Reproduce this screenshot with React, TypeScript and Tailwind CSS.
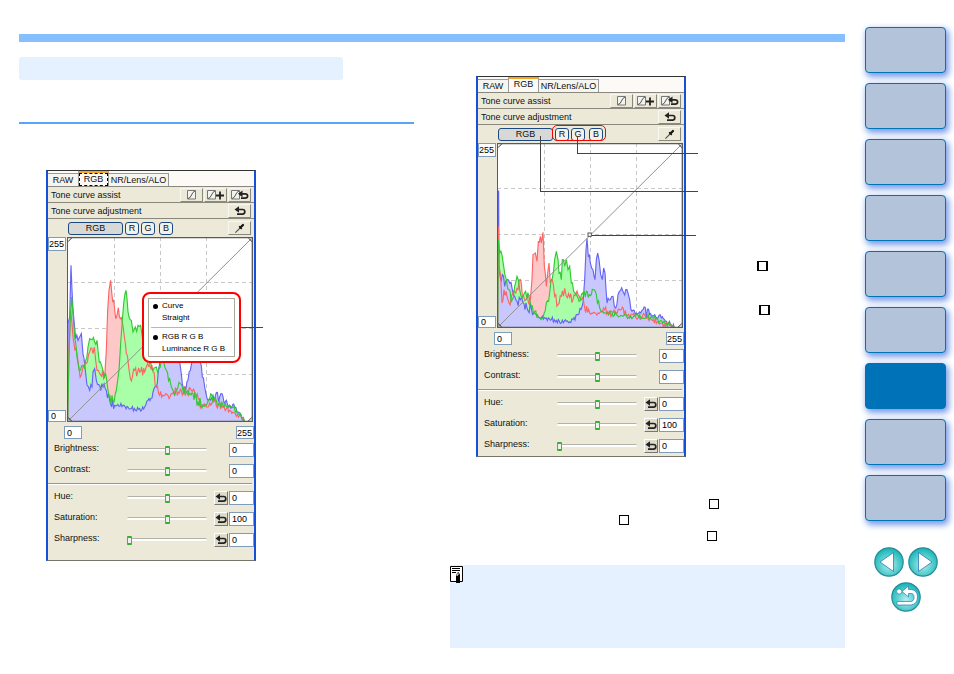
import { useState } from "react";
import type { ReactNode } from "react";

type Pt = [number, number];
type Channels = { red: Pt[]; green: Pt[]; blue: Pt[] };

// histogram outlines, on a 558 x 555 canvas
const histogramA: Channels = {
  red: [
    [2, 550], [6, 340], [11, 220], [15, 260], [21, 320], [30, 350], [36, 395], [43, 415], [48, 390], [58, 380],
    [68, 345], [78, 350], [82, 330], [86, 370], [90, 400], [98, 410], [113, 420], [118, 340], [122, 220], [126, 160],
    [131, 130], [134, 165], [140, 190], [146, 245], [150, 235], [154, 212], [160, 245], [166, 255], [172, 300], [178, 350],
    [185, 390], [190, 425], [203, 400], [218, 405], [233, 405], [248, 385], [258, 405], [268, 450], [275, 470], [293, 475],
    [313, 470], [343, 460], [358, 465], [373, 460], [388, 480], [403, 505], [418, 510], [438, 490], [458, 505], [478, 515],
    [498, 525], [518, 535], [532, 552],
  ],
  green: [
    [2, 550], [6, 360], [10, 240], [14, 180], [18, 230], [23, 300], [30, 360], [40, 400], [48, 385], [56, 370],
    [63, 330], [68, 305], [76, 308], [83, 315], [90, 310], [94, 350], [100, 375], [108, 400], [118, 420], [126, 480],
    [138, 493], [148, 460], [156, 400], [161, 320], [166, 250], [170, 200], [174, 170], [177, 160], [180, 185], [186, 240],
    [193, 250], [198, 285], [205, 270], [213, 265], [221, 265], [226, 300], [238, 345], [248, 380], [258, 400], [268, 390],
    [276, 395], [284, 355], [290, 375], [298, 400], [308, 425], [313, 450], [320, 465], [333, 450], [348, 460], [363, 460],
    [378, 470], [393, 495], [408, 505], [418, 505], [428, 485], [448, 490], [468, 505], [488, 505], [508, 520], [532, 552],
  ],
  blue: [
    [2, 550], [3, 260], [8, 240], [12, 85], [15, 160], [21, 250], [26, 305], [33, 310], [38, 300], [43, 290],
    [48, 350], [55, 400], [60, 445], [68, 460], [75, 450], [78, 405], [83, 395], [88, 430], [98, 445], [108, 450],
    [118, 460], [128, 490], [143, 505], [168, 505], [193, 515], [218, 515], [233, 510], [243, 490], [258, 465], [268, 450],
    [274, 400], [278, 380], [283, 300], [293, 280], [310, 300], [330, 350], [338, 375], [346, 440], [354, 450], [363, 430],
    [370, 400], [378, 365], [383, 330], [393, 350], [400, 375], [406, 420], [413, 450], [418, 475], [428, 485], [438, 475],
    [458, 480], [478, 490], [488, 505], [503, 510], [510, 525], [520, 530], [532, 552],
  ],
};

const histogramB: Channels = {
  red: [
    [2, 552], [4, 250], [6, 370], [11, 400], [15, 480], [21, 440], [30, 460], [36, 480], [43, 460], [53, 446],
    [63, 440], [70, 410], [76, 460], [88, 470], [100, 470], [105, 410], [108, 335], [115, 330], [120, 355], [124, 296],
    [130, 280], [133, 300], [138, 268], [142, 370], [148, 430], [152, 390], [156, 360], [160, 420], [166, 410], [173, 460],
    [183, 485], [193, 460], [203, 436], [208, 460], [228, 470], [243, 455], [253, 470], [263, 495], [278, 510], [303, 510],
    [323, 500], [348, 510], [373, 500], [388, 520], [408, 515], [423, 525], [443, 515], [463, 530], [493, 540], [532, 553],
  ],
  green: [
    [2, 552], [4, 290], [8, 330], [15, 336], [20, 370], [28, 410], [36, 440], [46, 470], [53, 430], [60, 400],
    [68, 440], [78, 460], [86, 445], [96, 460], [103, 490], [113, 505], [123, 522], [138, 525], [148, 480], [158, 450],
    [166, 405], [173, 350], [178, 325], [183, 350], [186, 390], [193, 410], [196, 350], [203, 370], [208, 350], [213, 380],
    [218, 370], [223, 420], [233, 450], [243, 465], [253, 455], [268, 445], [283, 455], [298, 455], [308, 495], [318, 505],
    [338, 510], [358, 515], [378, 520], [398, 525], [418, 515], [438, 525], [463, 520], [488, 535], [508, 542], [532, 553],
  ],
  blue: [
    [2, 552], [2, 144], [5, 144], [6, 370], [10, 405], [16, 395], [23, 430], [31, 410], [38, 420], [46, 440],
    [53, 460], [60, 475], [70, 470], [78, 480], [90, 495], [103, 495], [113, 510], [123, 520], [133, 525], [148, 525],
    [178, 532], [208, 535], [228, 530], [243, 515], [258, 480], [263, 410], [267, 320], [270, 286], [274, 340], [280, 360],
    [288, 380], [294, 410], [298, 350], [302, 330], [306, 350], [311, 395], [316, 410], [320, 375], [324, 390], [330, 480],
    [340, 470], [348, 460], [356, 495], [363, 455], [371, 442], [380, 450], [386, 440], [393, 450], [398, 470], [405, 505],
    [418, 510], [438, 500], [458, 515], [473, 515], [493, 525], [508, 535], [532, 553],
  ],
};

// adds the small bin-to-bin noise between the outline points
function jag(points: Pt[], seed: number) {
  let s = seed;
  const out: string[] = [];
  points.forEach(([x, y], i) => {
    out.push(`${x},${y}`);
    const next = points[i + 1];
    if (!next) return;
    const steps = Math.floor((next[0] - x) / 3);
    for (let k = 1; k < steps; k++) {
      s = (s * 73 + 41) % 997;
      const t = k / steps;
      const noise = (s / 997 - 0.5) * (y > 500 ? 16 : 32);
      out.push(`${x + (next[0] - x) * t},${Math.min(553, y + (next[1] - y) * t + noise)}`);
    }
  });
  return out.join(" ");
}

function Histogram({ data, handle }: { data: Channels; handle?: boolean }) {
  const red = jag(data.red, 11);
  const green = jag(data.green, 57);
  const blue = jag(data.blue, 203);
  return (
    <svg viewBox="0 0 558 555" preserveAspectRatio="none" className="block h-[185px] w-[186px] bg-white">
      <g stroke="#c8c8c8" strokeWidth="3" strokeDasharray="12 9" shapeRendering="crispEdges">
        <path d="M141 0V555M279 0V555M417 0V555M0 137H558M0 275H558M0 413H558" />
      </g>
      <polygon points={`${red} 2,555`} fill="#ffc8c8" />
      <polygon points={`${green} 2,555`} fill="#a8ffa8" />
      <polygon points={`${blue} 2,555`} fill="#c8c8ff" />
      <g fill="none" strokeWidth="3.4">
        <polyline points={blue} stroke="#6464f5" />
        <polyline points={red} stroke="#ff6464" />
        <polyline points={green} stroke="#32c832" />
      </g>
      <path d="M6 549L552 6" stroke="#909090" strokeWidth="3" />
      <path d="M3 14L14 3M544 3L555 14M3 541L14 552M544 552L555 541" stroke="#333" strokeWidth="3" />
      <path d="M1 0V555M556 0V555M0 2H558M0 553H558" stroke="#5a5a5a" strokeWidth="4" />
      {handle && <rect x="273" y="270" width="10" height="10" fill="#fff" stroke="#555" strokeWidth="3" />}
    </svg>
  );
}

function UndoIcon() {
  return (
    <svg viewBox="0 0 12 10" className="h-[10px] w-[12px]" fill="none" stroke="#222" strokeWidth="1.7">
      <path d="M3 3.5H8.6Q10.8 3.5 10.8 5.8T8.6 8.1H3" />
      <path d="M0.5 3.5L5 0.2V6.8z" fill="#222" stroke="none" />
    </svg>
  );
}

function CurveIcon({ kind }: { kind?: "plus" | "undo" }) {
  return (
    <svg viewBox="0 0 18 10" className="h-[10px] w-[18px]" fill="none">
      <g transform={kind ? "translate(0 0)" : "translate(4 0)"}>
        <path d="M0.5 0.5H8.5V9H0.5z" fill="#f4f4ee" stroke="#777" />
        <path d="M1 8.5Q3.5 8 4.5 5T8 1" stroke="#555" />
      </g>
      {kind === "plus" && <path d="M13 1.5V9.5M9 5.5H17" stroke="#222" strokeWidth="1.8" />}
      {kind === "undo" && (
        <>
          <path d="M10 3.8H14Q16.6 3.8 16.6 6T14 8.2H10" stroke="#222" strokeWidth="1.7" />
          <path d="M7 3.8L11.5 0.4V7.2z" fill="#222" />
        </>
      )}
    </svg>
  );
}

function DropperIcon() {
  return (
    <svg viewBox="0 0 12 12" className="h-[11px] w-[11px]">
      <path d="M1.5 10.5L7 5" stroke="#555" strokeWidth="1.4" />
      <path d="M5.5 3.5L8.5 6.5" stroke="#111" strokeWidth="1.3" />
      <path d="M7 5L9.8 2.2" stroke="#111" strokeWidth="2.4" strokeLinecap="round" />
    </svg>
  );
}

function ToolButton({ label, children }: { label: string; children: ReactNode }) {
  return (
    <button
      aria-label={label}
      className="flex h-[14px] w-[23px] items-center justify-center border border-t-[#f8f7f0] border-r-[#8a887c] border-b-[#8a887c] border-l-[#f8f7f0] bg-[#ece9d8]"
    >
      {children}
    </button>
  );
}

function NumberBox({ label, value, className }: { label: string; value: string; className: string }) {
  return (
    <input
      aria-label={label}
      defaultValue={value}
      className={`border border-[#7f9db9] bg-white py-0 pr-0 text-[9px] leading-[11px] text-black outline-none ${className}`}
    />
  );
}

function SliderRow({ label, value, at, reset }: { label: string; value: string; at: number; reset?: boolean }) {
  const [pos, setPos] = useState(at);
  return (
    <div className="flex h-[21px] items-center pl-[6px]">
      <label className="flex flex-1 items-center">
        <span className="w-[73px] pb-[2px]">{label}:</span>
        <input
          type="range"
          value={pos}
          onChange={(e) => setPos(Number(e.target.value))}
          className="h-[3px] w-[80px] appearance-none rounded-sm border-t border-[#b4b2a6] bg-white [&::-webkit-slider-thumb]:h-[9px] [&::-webkit-slider-thumb]:w-[5px] [&::-webkit-slider-thumb]:appearance-none [&::-webkit-slider-thumb]:rounded-[1px] [&::-webkit-slider-thumb]:border-x [&::-webkit-slider-thumb]:border-y-2 [&::-webkit-slider-thumb]:border-x-[#7d9080] [&::-webkit-slider-thumb]:border-y-[#35b035] [&::-webkit-slider-thumb]:bg-[#eef2ea]"
        />
      </label>
      {reset && (
        <button
          aria-label={`Reset ${label}`}
          className="mr-px flex h-[14px] w-[14px] items-center justify-center border border-t-white border-r-[#777] border-b-[#777] border-l-white bg-[#dedbc9]"
        >
          <UndoIcon />
        </button>
      )}
      <NumberBox label={`${label} value`} value={value} className="h-[14px] w-[25px] pl-[2px]" />
    </div>
  );
}

function ToolPalette({ data, focused, handle, className, children }: {
  data: Channels;
  focused?: boolean;
  handle?: boolean;
  className?: string;
  children?: ReactNode;
}) {
  const channel = "flex h-[13px] w-[14px] items-center justify-center rounded-[3px] border border-[#1c4a80] bg-[#f3f2ea]";
  return (
    <section
      className={`relative w-[210px] shrink-0 border-x-2 border-t border-b border-x-[#1650d8] border-t-[#333] border-b-[#77756a] bg-[#ece9d8] text-[9px] leading-[11px] text-[#111] ${className ?? ""}`}
    >
      <div className="flex h-[15px] items-end bg-[#fbfaf6]">
        <button className="h-[13px] w-[30px] border-t border-[#999] bg-[#f6f5ef]">RAW</button>
        <button className="flex h-[15px] w-[31px] items-start justify-center border-x border-t-2 border-x-[#999] border-t-[#f5a623] bg-[#fbfaf6]">
          <span className={focused ? "w-[29px] border border-dashed border-black" : "w-[29px]"}>RGB</span>
        </button>
        <button className="h-[13px] w-[60px] border-t border-r border-[#999] bg-[#f6f5ef]">NR/Lens/ALO</button>
      </div>
      <div className="flex h-[17px] items-center justify-between border-y border-[#8a887c] pr-[3px] pl-[3px]">
        <span className="pt-px">Tone curve assist</span>
        <div className="flex gap-px">
          <ToolButton label="Assist"><CurveIcon /></ToolButton>
          <ToolButton label="Assist more"><CurveIcon kind="plus" /></ToolButton>
          <ToolButton label="Undo assist"><CurveIcon kind="undo" /></ToolButton>
        </div>
      </div>
      <div className="flex h-[16px] items-center justify-between border-b border-[#8a887c] pr-[3px] pl-[3px]">
        <span className="pt-px">Tone curve adjustment</span>
        <ToolButton label="Reset curve"><UndoIcon /></ToolButton>
      </div>
      <div className="flex h-[18px] items-center pr-[3px] pl-5">
        <button className="flex h-[13px] w-[55px] items-center justify-center rounded-[3px] border border-[#1c4a80] bg-[#d8d8d6]">
          RGB
        </button>
        <div className="ml-[2px] flex flex-1 gap-[2px]">
          <button className={channel}>R</button>
          <button className={channel}>G</button>
          <button className={`ml-[2px] ${channel}`}>B</button>
        </div>
        <ToolButton label="Pick"><DropperIcon /></ToolButton>
      </div>
      <div className="flex">
        <div className="flex w-[19px] flex-col justify-between">
          <NumberBox label="Output maximum" value="255" className="h-[14px] w-[18px] pl-0" />
          <NumberBox label="Output minimum" value="0" className="h-[12px] w-[18px] pl-[2px]" />
        </div>
        <Histogram data={data} handle={handle} />
      </div>
      <div className="flex h-[17px] items-end justify-between pl-4">
        <NumberBox label="Input minimum" value="0" className="h-[13px] w-[18px] pl-[2px]" />
        <NumberBox label="Input maximum" value="255" className="h-[13px] w-[18px] pl-0" />
      </div>
      <SliderRow label="Brightness" value="0" at={50} />
      <SliderRow label="Contrast" value="0" at={50} />
      <hr className="mt-[2px] mr-[2px] mb-[2px] h-[2px] border-t border-b border-t-[#99978a] border-b-white" />
      <SliderRow label="Hue" value="0" at={50} reset />
      <SliderRow label="Saturation" value="100" at={50} reset />
      <SliderRow label="Sharpness" value="0" at={0} reset />
      {children}
    </section>
  );
}

function CurveMenu() {
  const item = "block w-full pl-[13px] text-left text-[8px] leading-[12px]";
  const picked = "relative before:absolute before:top-[4px] before:left-[4px] before:h-[5px] before:w-[5px] before:rounded-full before:bg-black";
  return (
    <div className="absolute top-[121px] left-[94px] w-[99px] rounded-lg border-2 border-[#ff0000] bg-white p-[4px]">
      <div className="border border-[#aaa89c] py-px text-black">
        <button className={`${item} ${picked}`}>Curve</button>
        <button className={item}>Straight</button>
        <hr className="mx-[2px] my-[3px] border-[#bbb8aa]" />
        <button className={`${item} ${picked}`}>RGB R G B</button>
        <button className={item}>Luminance R G B</button>
      </div>
    </div>
  );
}

function Tick({ className }: { className: string }) {
  return (
    <input
      type="checkbox"
      aria-label="Step"
      className={`block h-[10px] appearance-none border-y border-black bg-white ${className}`}
    />
  );
}

function RoundButton({ label, children }: { label: string; children: ReactNode }) {
  return (
    <button aria-label={label} className="h-[30px] w-[30px]">
      <svg viewBox="0 0 30 30" className="block h-full w-full">
        <defs>
          <radialGradient id={`fill-${label}`} cx="50%" cy="60%" r="55%">
            <stop offset="0" stopColor="#b4f0ee" />
            <stop offset="1" stopColor="#1cb8b8" />
          </radialGradient>
        </defs>
        <circle cx="15" cy="15" r="14.2" fill={`url(#fill-${label})`} stroke="#2a8a9a" strokeWidth="1.2" />
        {children}
      </svg>
    </button>
  );
}

const chapters = [1, 2, 3, 4, 5, 6, 7, 8, 9];

export default function App() {
  return (
    <div className="flex min-h-screen gap-5 bg-white pr-2 pl-[19px] font-['Liberation_Sans',Arial,sans-serif]">
      <main className="min-w-0 flex-1 pt-[34px]">
        <div className="h-2 bg-[#85bfff]" />
        <div className="grid grid-cols-2 gap-9">
          <div className="pt-[15px]">
            <div className="h-[23px] w-[82%] rounded-[3px] bg-[#e5f1fe]" />
            <div className="mt-[42px] h-[2px] bg-[#56a5fa]" />
            <ToolPalette data={histogramA} focused className="mt-[46px] ml-[27px] pb-[10px]">
              <CurveMenu />
              <div className="absolute top-[156px] left-[193px] h-px w-[22px] bg-[#444]" />
            </ToolPalette>
          </div>

          <div className="pt-[34px]">
            <div className="flex pl-[26px]">
              <ToolPalette data={histogramB} handle>
                <div className="absolute top-[48px] left-[74px] h-[16px] w-[54px] rounded-[5px] border border-[#ff0000]" />
                <div className="absolute top-[59px] left-[99px] h-[18px] w-[121px] border-b border-l border-[#444]" />
                <div className="absolute top-[59px] left-[62px] h-[56px] w-[158px] border-b border-l border-[#444]" />
                <div className="absolute top-[158px] left-[114px] h-px w-[104px] bg-[#444]" />
              </ToolPalette>
              <div className="flex flex-col gap-[34px] pt-[185px] pl-[71px]">
                <Tick className="w-[11px] border-x-2" />
                <Tick className="ml-[2px] w-[11px] border-x-2" />
              </div>
            </div>
            <div className="flex flex-col gap-[6px] pt-[42px]">
              <Tick className="ml-[259px] w-[10px] border-x" />
              <Tick className="ml-[169px] w-[10px] border-x" />
              <Tick className="ml-[257px] w-[10px] border-x" />
            </div>
            <div className="mt-6 h-[83px] bg-[#e5f1fe]">
              <svg viewBox="0 0 13 18" className="block h-[18px] w-[13px]">
                <path d="M0.5 1.5H12.5V16.5H0.5z" fill="#fff" stroke="#000" />
                <path d="M2 3.5H10M2 5.5H10M2 7.5H6" stroke="#000" />
                <path d="M6 18V11L7 8L8.5 7L10 9.5V18z" fill="#000" />
                <path d="M6.2 10.5L8 7.5L9 9L7.5 11z" fill="#ccc" />
              </svg>
            </div>
          </div>
        </div>
      </main>

      <nav className="flex w-[81px] shrink-0 flex-col gap-[10px] pt-[27px]">
        {chapters.map((n) => (
          <button
            key={n}
            aria-label={`Chapter ${n}`}
            className={`h-[46px] rounded-[4px] border border-[#0072b8] shadow-[2px_3px_6px_1px_#7a9ce6] ${n === 7 ? "bg-[#0072b8]" : "bg-[#b3c3da]"}`}
          />
        ))}
        <div className="flex flex-wrap justify-center gap-x-1 gap-y-[5px] pt-4">
          <RoundButton label="previous">
            <path d="M19.5 5.5V24.5L6 15z" fill="#fff" stroke="#2878b8" strokeWidth="0.8" />
          </RoundButton>
          <RoundButton label="next">
            <path d="M10.5 5.5V24.5L24 15z" fill="#fff" stroke="#2878b8" strokeWidth="0.8" />
          </RoundButton>
          <RoundButton label="back">
            <g stroke="#2878b8" strokeWidth="0.7" fill="#fff" strokeLinejoin="round">
              <circle cx="8.2" cy="9.5" r="2.6" />
              <path d="M11 9.5L17.5 4V7.5H20Q26.5 8 26.5 15T20 23H6V19.5H19.5Q23 19.5 23 15.3T19.5 11.5H17.5V15z" />
            </g>
          </RoundButton>
        </div>
      </nav>
    </div>
  );
}
